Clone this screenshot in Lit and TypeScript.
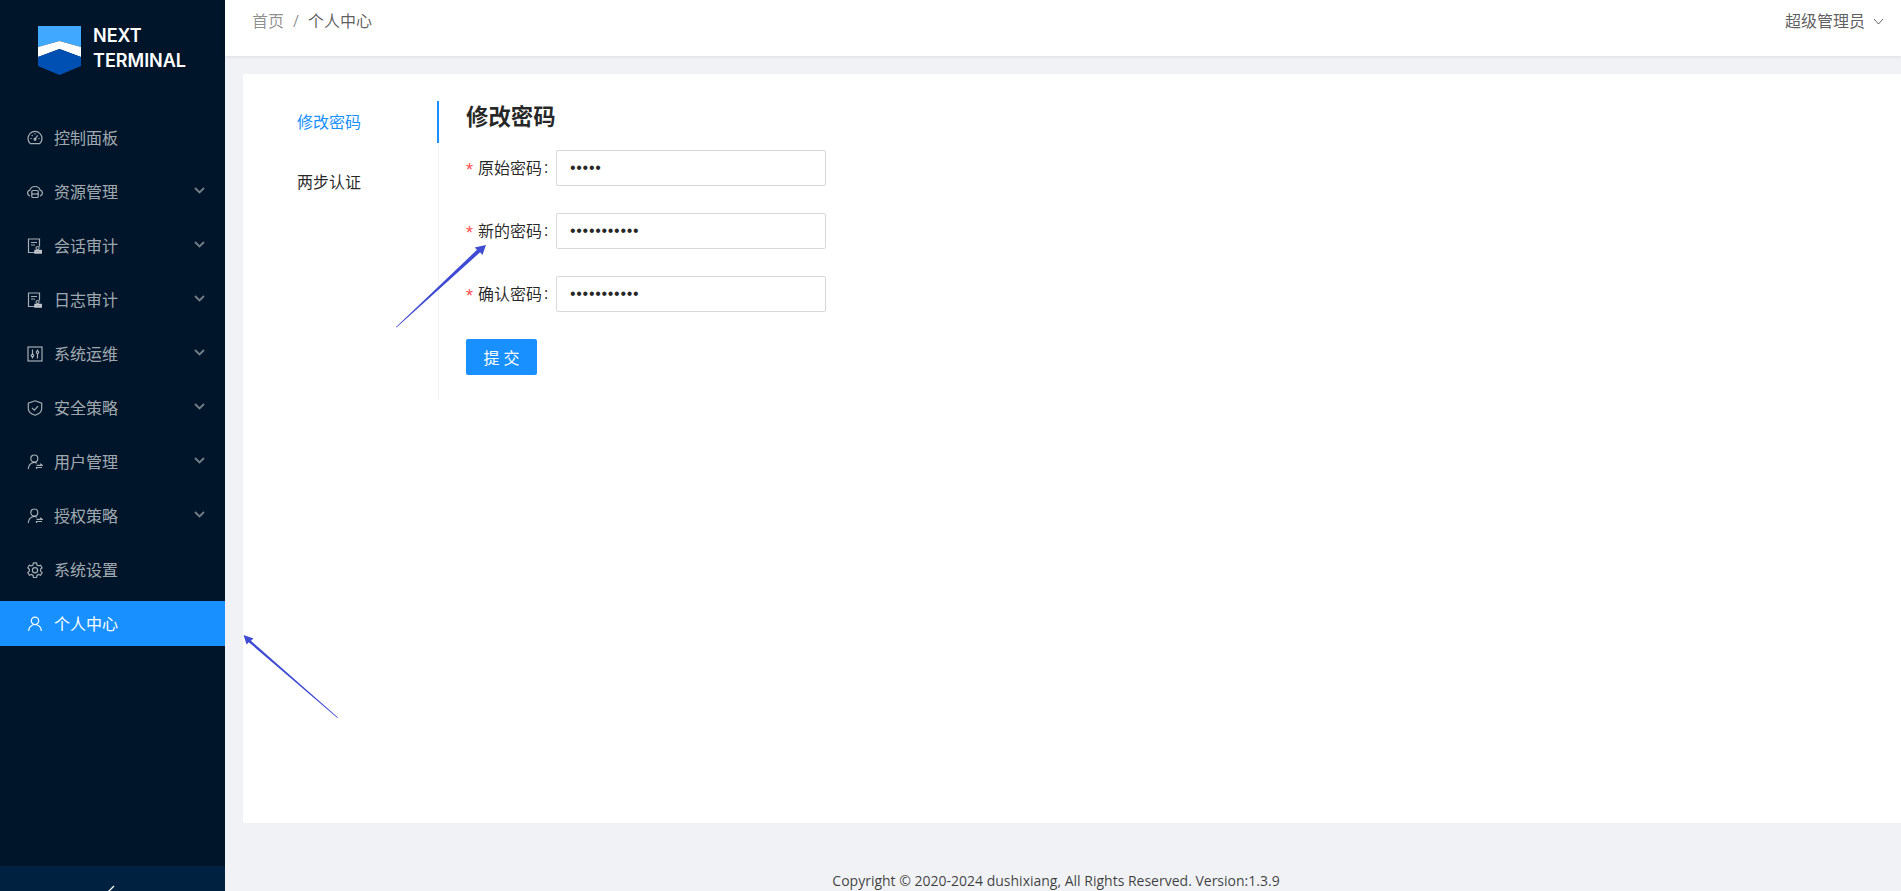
import { LitElement, html, css, svg } from "lit";
import { customElement } from "lit/decorators.js";

const icons: Record<string, unknown> = {
  gauge: svg`<path d="M3.300 13.600A7 7 0 1 1 12.700 13.600Z"/><path d="M8 9l2.700-3.600M3.400 8.500h1.300M11.300 8.500h1.300M8 3.300v1.300M4.700 5.100l.9.900"/><circle cx="8" cy="9.300" r="1"/>`,
  cloud: svg`<path d="M3 12C1.500 11.600.6 10.400.6 9c0-1.400 1-2.600 2.300-2.900C3.500 4 5.500 2.500 8 2.500s4.500 1.500 5.100 3.600c1.300.3 2.300 1.500 2.300 2.900 0 1.400-.9 2.600-2.400 3"/><rect x="4.800" y="6.500" width="6.400" height="7" rx="1"/><path d="M4.800 10h6.400"/>`,
  audit: svg`<path d="M7.500 14.500H1.500V1h11v7.500"/><path d="M4 4.500h6M4 7h4"/><circle cx="10.500" cy="10" r="1.500"/><path d="M7.800 15.200h6.600v-2.800H7.800z" fill="currentColor"/>`,
  ops: svg`<rect x="1" y="1" width="14" height="14"/><path d="M5.500 3.500v9M10.500 3.500v9"/><circle cx="5.500" cy="9.500" r="1.200" fill="#001529"/><circle cx="10.500" cy="6.200" r="1.200" fill="#001529"/>`,
  shield: svg`<path d="M8 .8l6.700 2.300v5.500c0 3.300-3.100 5.600-6.700 6.700-3.600-1.100-6.700-3.400-6.700-6.700V3.100z"/><path d="M5 7.800l2.300 2.300 3.800-4"/>`,
  userx: svg`<circle cx="7.300" cy="4.500" r="3.500"/><path d="M1.300 15c0-3.500 2.500-6.500 6-6.500 1 0 1.900.2 2.700.7"/><path d="M9.500 11.300h5.500l-1.800-1.500M15 13.500H9.500v1.500" stroke-width="1.200"/>`,
  gear: svg`<path d="M6.500.8h3l.5 2.200 1.500.9 2.100-.7 1.500 2.600-1.600 1.500v1.800l1.600 1.500-1.500 2.600-2.100-.7-1.500.9-.5 2.200h-3l-.5-2.200-1.500-.9-2.100.7L.8 10.600l1.600-1.500V7.300L.8 5.800l1.500-2.600 2.100.7 1.500-.9z"/><circle cx="8" cy="8.200" r="2.600"/>`,
  user: svg`<circle cx="8" cy="4.800" r="3.700"/><path d="M1.600 15c0-3.600 2.900-6.500 6.400-6.500s6.400 2.900 6.400 6.500"/>`,
};

const menu = [
  ["gauge", "控制面板", false],
  ["cloud", "资源管理", true],
  ["audit", "会话审计", true],
  ["audit", "日志审计", true],
  ["ops", "系统运维", true],
  ["shield", "安全策略", true],
  ["userx", "用户管理", true],
  ["userx", "授权策略", true],
  ["gear", "系统设置", false],
  ["user", "个人中心", false],
] as [string, string, boolean][];

const fields = [
  ["原始密码", "•••••"],
  ["新的密码", "•••••••••••"],
  ["确认密码", "•••••••••••"],
];

@customElement("app-root")
export class AppRoot extends LitElement {
  static styles = css`
    :host {
      display: block;
      position: relative;
      width: 1901px;
      height: 891px;
      overflow: hidden;
      font-family: "Open Sans", "Noto Sans CJK SC", sans-serif;
      font-size: 16px;
      color: rgba(0, 0, 0, 0.85);
      background: #f0f2f5;
    }
    .app { display: flex; height: 891px; }
    .side {
      width: 225px;
      flex: none;
      background: #001529;
      color: rgba(255, 255, 255, 0.65);
      display: flex;
      flex-direction: column;
    }
    .logo {
      display: flex;
      align-items: flex-start;
      gap: 12px;
      padding: 26px 0 0 38px;
      height: 93px;
      box-sizing: border-box;
    }
    .logo svg { display: block; }
    .logo-t {
      font-family: Inter, sans-serif;
      font-weight: 600;
      font-size: 18px;
      line-height: 24.500px;
      color: #fff;
      margin-top: -2px;
    }
    .menu { flex: 1; padding-top: 22px; }
    .item {
      height: 45px;
      margin-bottom: 9px;
      display: flex;
      align-items: center;
      padding: 0 20px 0 27px;
    }
    .item.on { background: #1890ff; color: #fff; }
    .item .ic {
      width: 16px;
      height: 16px;
      fill: none;
      stroke: currentColor;
      stroke-width: 1.200;
      flex: none;
      margin-right: 11px;
    }
    .item .lb { flex: 1; line-height: 24px; }
    .chev { width: 11px; height: 7px; fill: none; stroke: rgba(255,255,255,.45); stroke-width: 1.800; margin-top: -3px; }
    .collapse {
      height: 25px;
      background: #002140;
      display: flex;
      justify-content: center;
      overflow: hidden;
    }
    .collapse svg { margin-top: 19px; margin-left: -1px; }
    .main { flex: 1; min-width: 0; display: flex; flex-direction: column; }
    .top {
      height: 56px;
      flex: none;
      background: #fff;
      box-shadow: 0 1px 4px rgba(0, 21, 41, 0.08);
      display: flex;
      justify-content: space-between;
      padding: 0 17px 0 27px;
      line-height: 42px;
      position: relative;
    }
    .crumb { color: rgba(0, 0, 0, 0.45); display: flex; }
    .crumb i { font-style: normal; margin: 0 9px; }
    .crumb b { font-weight: 400; color: rgba(0, 0, 0, 0.65); }
    .me { display: flex; color: rgba(0, 0, 0, 0.65); }
    .me svg { width: 11px; height: 7px; margin: 18px 0 0 8px; fill: none; stroke: rgba(0,0,0,.6); stroke-width: 1; }
    .card {
      background: #fff;
      margin: 18px 0 0 18px;
      height: 749px;
      flex: none;
      padding-top: 27px;
      box-sizing: border-box;
      display: flex;
      align-items: flex-start;
    }
    .tabs {
      width: 196px;
      height: 299px;
      flex: none;
      box-sizing: border-box;
      border-right: 1px solid #f0f0f0;
      position: relative;
      margin-right: 27px;
    }
    .tab { height: 42px; line-height: 42px; padding-left: 54px; margin-bottom: 18px; }
    .tab.on { color: #1890ff; border-right: 2px solid #1890ff; margin-right: -1px; }
    h2 { margin: 0; height: 49px; font-size: 22.400px; line-height: 32px; font-weight: 600; }
    .row { display: flex; align-items: center; height: 36px; margin-bottom: 27px; }
    .lab { width: 90px; flex: none; white-space: nowrap; display: flex; align-items: center; padding-bottom: 2px; box-sizing: border-box; }
    .lab em { color: #ff4d4f; font-style: normal; font-family: "Liberation Sans", sans-serif; font-size: 18px; width: 12px; height: 20px; line-height: 26px; }
    .lab s { text-decoration: none; margin-left: 2px; }
    .inp {
      width: 270px;
      height: 36px;
      box-sizing: border-box;
      border: 1px solid #d9d9d9;
      border-radius: 2px;
      padding: 0 13px;
      line-height: 34px;
      font-size: 16px;
      letter-spacing: 0.700px;
      font-family: "Liberation Sans", sans-serif;
    }
    .btn {
      width: 71px;
      height: 36px;
      border: 0;
      border-radius: 2px;
      background: #1890ff;
      color: #fff;
      font: inherit;
      padding: 0;
      display: block;
    }
    .foot { text-align: center; padding: 48px 14px 0 0; font-size: 14px; line-height: 20px; color: rgba(0, 0, 0, 0.75); }
    .marks { position: absolute; left: 0; top: 0; pointer-events: none; }
  `;

  render() {
    return html`
      <div class="app">
        <aside class="side">
          <div class="logo">
            <svg width="43" height="49" viewBox="0 0 43 49">
              <path d="M0 0h43v21L21.500 15 0 21z" fill="#40a9ff" />
              <path d="M0 21l21.500-6L43 21v10L21.500 23 0 31z" fill="#fff" />
              <path d="M0 31l21.500-8L43 31v9L21.500 49 0 40z" fill="#0050b3" />
            </svg>
            <div class="logo-t">NEXT<br />TERMINAL</div>
          </div>
          <nav class="menu">
            ${menu.map(
              ([ic, t, sub], i) => html`
                <div class="item ${i === 9 ? "on" : ""}">
                  <svg class="ic" viewBox="0 0 16 16">${icons[ic]}</svg>
                  <span class="lb">${t}</span>
                  ${sub ? html`<svg class="chev" viewBox="0 0 11 7"><path d="M1 1l4.500 4.500L10 1" /></svg>` : ""}
                </div>
              `,
            )}
          </nav>
          <div class="collapse">
            <svg width="12" height="12" viewBox="0 0 12 12" fill="none" stroke="#fff" stroke-width="1.300"><path d="M8 1L2 7" /></svg>
          </div>
        </aside>
        <div class="main">
          <header class="top">
            <div class="crumb"><span>首页</span><i>/</i><b>个人中心</b></div>
            <div class="me">超级管理员<svg viewBox="0 0 11 7"><path d="M1 1l4.500 5L10 1" /></svg></div>
          </header>
          <section class="card">
            <div class="tabs">
              <div class="tab on">修改密码</div>
              <div class="tab">两步认证</div>
            </div>
            <div class="pane">
              <h2>修改密码</h2>
              ${fields.map(
                ([l, v]) => html`
                  <div class="row">
                    <div class="lab"><em>*</em>${l}<s>:</s></div>
                    <div class="inp">${v}</div>
                  </div>
                `,
              )}
              <button class="btn">提 交</button>
            </div>
          </section>
          <footer class="foot">Copyright © 2020-2024 dushixiang, All Rights Reserved. Version:1.3.9</footer>
        </div>
      </div>
      <svg class="marks" width="1901" height="891" fill="#3f4bd2">
        <path d="M243.500 635l10 3.500-2.600 2.200 87.100 76.800-.6.500-88.600-75.800-2.200 2.400z" />
        <path d="M486 245l-3.600 10-2.300-2.700-83.600 75.200-.5-.5 81-77.200-2.300-2.400z" />
      </svg>
    `;
  }
}
